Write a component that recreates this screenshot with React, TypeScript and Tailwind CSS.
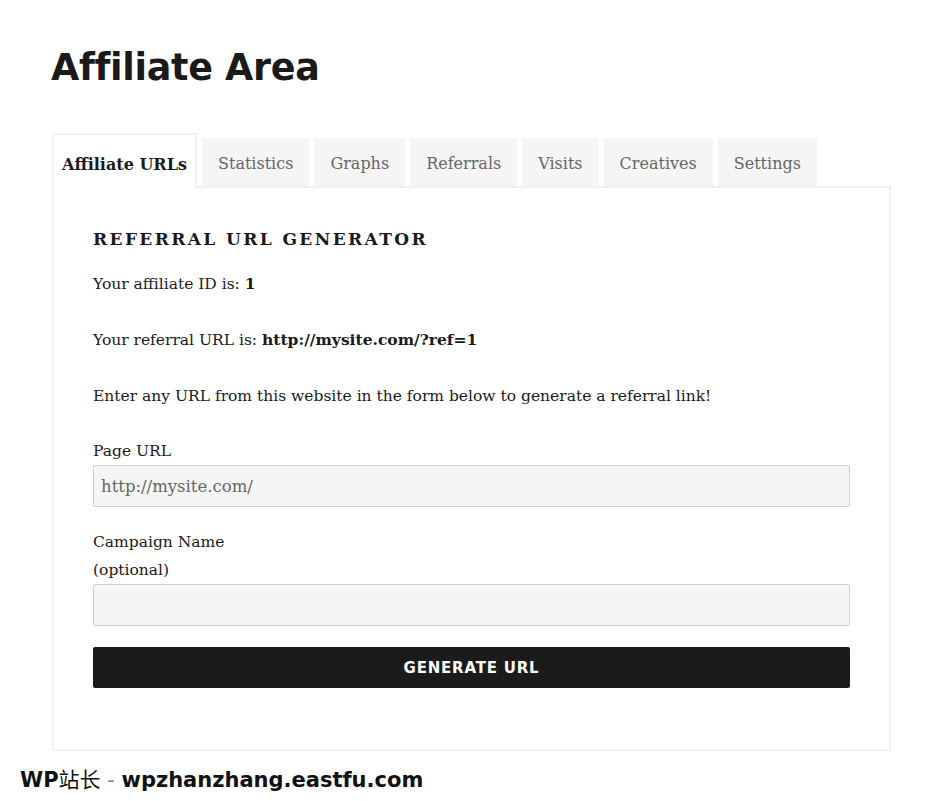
const tabs = ["Statistics", "Graphs", "Referrals", "Visits", "Creatives", "Settings"];

const serif = "font-['DejaVu_Serif',serif]";

export default function App() {
  return (
    <div className={`min-h-[801px] bg-white text-[#1a1a1a] ${serif}`}>
      <div className="pl-[51px] pr-[50px] pt-[44px]">
        <h1 className="font-['DejaVu_Sans',sans-serif] text-[36.5px] leading-[48px] font-bold tracking-[-0.3px] text-[#1a1a1a]">
          Affiliate Area
        </h1>

        <div className="mt-[41px] ml-[1px] w-[839px]">
          <ul className="flex items-end gap-[5px]">
            <li className="-mb-[2px] flex h-[55px] w-[145px] items-center justify-center border-2 border-b-0 border-[#f1f1f1] bg-white pt-[6px] text-[16px] font-bold">
              Affiliate URLs
            </li>
            {tabs.map((t) => (
              <li
                key={t}
                className="flex h-[48px] items-center bg-[#f5f5f5] px-[16px] pt-[4px] text-[16px] text-[#666]"
              >
                {t}
              </li>
            ))}
          </ul>

          <div className="border-2 border-[#f1f1f1] px-[39px] pt-[37px] pb-[61px] text-[15.5px] leading-[28px]">
            <h3 className="text-[17px] font-bold tracking-[2.4px] leading-[28px]">
              REFERRAL URL GENERATOR
            </h3>
            <p className="mt-[17px]">
              Your affiliate ID is: <strong>1</strong>
            </p>
            <p className="mt-[28px]">
              Your referral URL is: <strong>http://mysite.com/?ref=1</strong>
            </p>
            <p className="mt-[28px]">
              Enter any URL from this website in the form below to generate a referral link!
            </p>

            <form className="mt-[27px]" onSubmit={(e) => e.preventDefault()}>
              <label className="block">Page URL</label>
              <input
                type="text"
                defaultValue="http://mysite.com/"
                className="block h-[42px] w-full rounded-[2px] border border-[#d1d1d1] bg-[#f5f5f5] px-[7px] text-[16.5px] text-[#666] outline-none"
              />
              <label className="mt-[21px] block">
                Campaign Name
                <br />
                (optional)
              </label>
              <input
                type="text"
                className="block h-[42px] w-full rounded-[2px] border border-[#d1d1d1] bg-[#f5f5f5] px-[7px] text-[16.5px] outline-none"
              />
              <button
                type="submit"
                className="mt-[21px] block h-[41px] w-full rounded-[2px] bg-[#1b1b1b] font-['DejaVu_Sans',sans-serif] text-[15px] font-bold tracking-[0.8px] text-white"
              >
                GENERATE URL
              </button>
            </form>
          </div>
        </div>
      </div>

      <div className="mt-[15px] pl-[20px] font-['DejaVu_Sans','Noto_Sans_CJK_SC',sans-serif] text-[21px] leading-[28px] font-bold text-[#111]">
        WP<span className="font-normal">站长</span>
        <span className="font-normal text-[#888]"> - </span>wpzhanzhang.eastfu.com
      </div>
    </div>
  );
}
